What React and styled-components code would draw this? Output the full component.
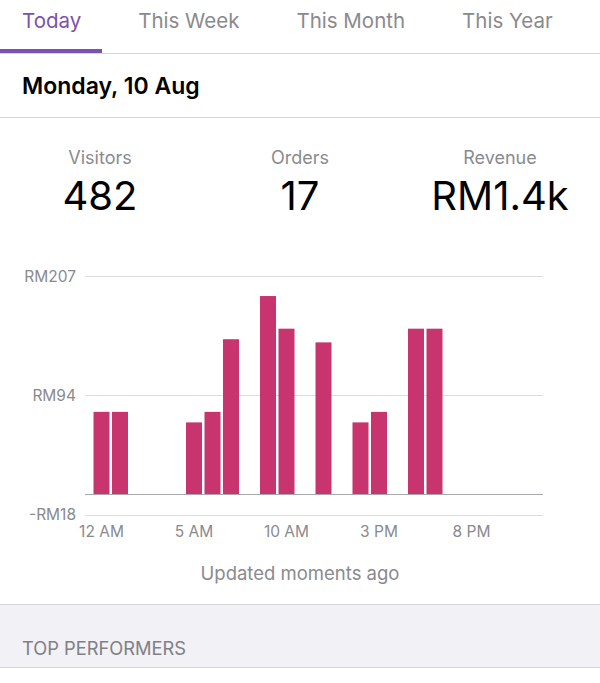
// Imports
import React from "react";
import styled, { createGlobalStyle } from "styled-components";

// Data
const tabs = ["Today", "This Week", "This Month", "This Year"];
const stats = [
	{ label: "Visitors", value: "482" },
	{ label: "Orders", value: "17" },
	{ label: "Revenue", value: "RM1.4k" },
];
// Revenue per hour (RM)
const hours = [78, 78, 0, 0, 0, 68, 78, 147, 0, 188, 157, 0, 144, 0, 68, 78, 0, 157, 157, 0, 0, 0, 0, 0];
const xLabels = [
	{ h: 0, text: "12 AM" },
	{ h: 5, text: "5 AM" },
	{ h: 10, text: "10 AM" },
	{ h: 15, text: "3 PM" },
	{ h: 20, text: "8 PM" },
];

// Chart geometry (svg starts at page y 260)
const TOP = 260;
const zeroY = 494 - TOP;
const pxPerUnit = 1.053;
const hourX = (h) => { return 101.5 + 18.5 * h; };

// Chart
const RevenueChart = () => {
	return(
		<ChartSvg width="600" height="285" viewBox="0 0 600 285">
			{/* Grid */}
			<line x1="85" x2="543" y1={276.5 - TOP} y2={276.5 - TOP} stroke="#dcdcdc" strokeWidth="1"/>
			<line x1="85" x2="543" y1={395.5 - TOP} y2={395.5 - TOP} stroke="#dcdcdc" strokeWidth="1"/>
			<line x1="85" x2="543" y1={515.5 - TOP} y2={515.5 - TOP} stroke="#dcdcdc" strokeWidth="1"/>
			{/* Y labels */}
			<text x="76" y={276 - TOP} textAnchor="end" dominantBaseline="central">RM207</text>
			<text x="76" y={395 - TOP} textAnchor="end" dominantBaseline="central">RM94</text>
			<text x="76" y={514 - TOP} textAnchor="end" dominantBaseline="central">-RM18</text>
			{/* Bars */}
			{hours.map((v, h) => {
				if (!v) return null;
				const height = v * pxPerUnit;
				return <rect key={h} x={hourX(h) - 8} y={zeroY - height} width="16" height={height} fill="#c8346e"/>;
			})}
			{/* Baseline */}
			<line x1="85" x2="543" y1={zeroY + 0.5} y2={zeroY + 0.5} stroke="#a9a9ad" strokeWidth="1"/>
			{/* X labels */}
			{xLabels.map((l) => {
				return <text key={l.h} x={hourX(l.h)} y={531 - TOP} textAnchor="middle" dominantBaseline="central">{l.text}</text>;
			})}
		</ChartSvg>
	);
};

// Component
const App = () => {
	return(
		<Page>
			<GlobalStyle/>

			{/* Tabs */}
			<TabBar>
				{tabs.map((t, i) => {
					return <Tab key={t} $active={i === 0}>{t}</Tab>;
				})}
			</TabBar>

			{/* Date */}
			<DateRow>Monday, 10 Aug</DateRow>

			{/* Stats */}
			<Stats>
				{stats.map((s) => {
					return(
						<Stat key={s.label}>
							<StatLabel>{s.label}</StatLabel>
							<StatValue>{s.value}</StatValue>
						</Stat>
					);
				})}
			</Stats>

			{/* Chart */}
			<RevenueChart/>
			<Updated>Updated moments ago</Updated>

			{/* Section header */}
			<SectionHeader>TOP PERFORMERS</SectionHeader>
		</Page>
	);
};

// Styled
const GlobalStyle = createGlobalStyle`
	body{
		margin: 0;
		background-color: #ffffff;
		font-family: Inter, "Noto Sans", sans-serif;
	}
`;

const Page = styled.div`
	width: 600px;
	min-height: 683px;
	display: flex;
	flex-direction: column;
	background-color: #ffffff;
`;

const TabBar = styled.nav`
	display: flex;
	gap: 14px;
	height: 53px;
	border-bottom: 1px solid #d6d6d9;
`;

const Tab = styled.div`
	display: flex;
	align-items: flex-start;
	padding: 8px 21px 0 22px;
	font-size: 20.5px;
	line-height: 26px;
	color: ${(p) => { return p.$active ? "#7c52ab" : "#8a8a8e"; }};
	box-shadow: ${(p) => { return p.$active ? "inset 0 -4px 0 #7b52ad" : "none"; }};
`;

const DateRow = styled.div`
	display: flex;
	align-items: center;
	height: 63px;
	padding: 0 22px;
	font-size: 23px;
	font-weight: 600;
	color: #000000;
	border-bottom: 1px solid #d6d6d9;
`;

const Stats = styled.div`
	display: grid;
	grid-template-columns: repeat(3, 1fr);
	padding: 29px 0 0 0;
`;

const Stat = styled.div`
	display: flex;
	flex-direction: column;
	align-items: center;
	gap: 3px;
`;

const StatLabel = styled.div`
	font-size: 18px;
	line-height: 22px;
	color: #8a8a8e;
`;

const StatValue = styled.div`
	font-size: 40px;
	line-height: 48px;
	color: #000000;
`;

const ChartSvg = styled.svg`
	display: block;
	margin-top: 40px;
	text{
		font-family: Inter, "Noto Sans", sans-serif;
		font-size: 15.5px;
		fill: #8a8a8e;
	}
`;

const Updated = styled.div`
	margin-top: 18px;
	padding-bottom: 21px;
	text-align: center;
	font-size: 18.5px;
	line-height: 20px;
	color: #8a8a8e;
	border-bottom: 1px solid #d6d6d9;
`;

const SectionHeader = styled.div`
	display: flex;
	align-items: flex-end;
	height: 63px;
	padding: 0 22px 8px 22px;
	box-sizing: border-box;
	background-color: #f1f1f6;
	font-size: 18.3px;
	color: #808085;
	border-bottom: 1px solid #d6d6d9;
`;

// Export
export default App;
